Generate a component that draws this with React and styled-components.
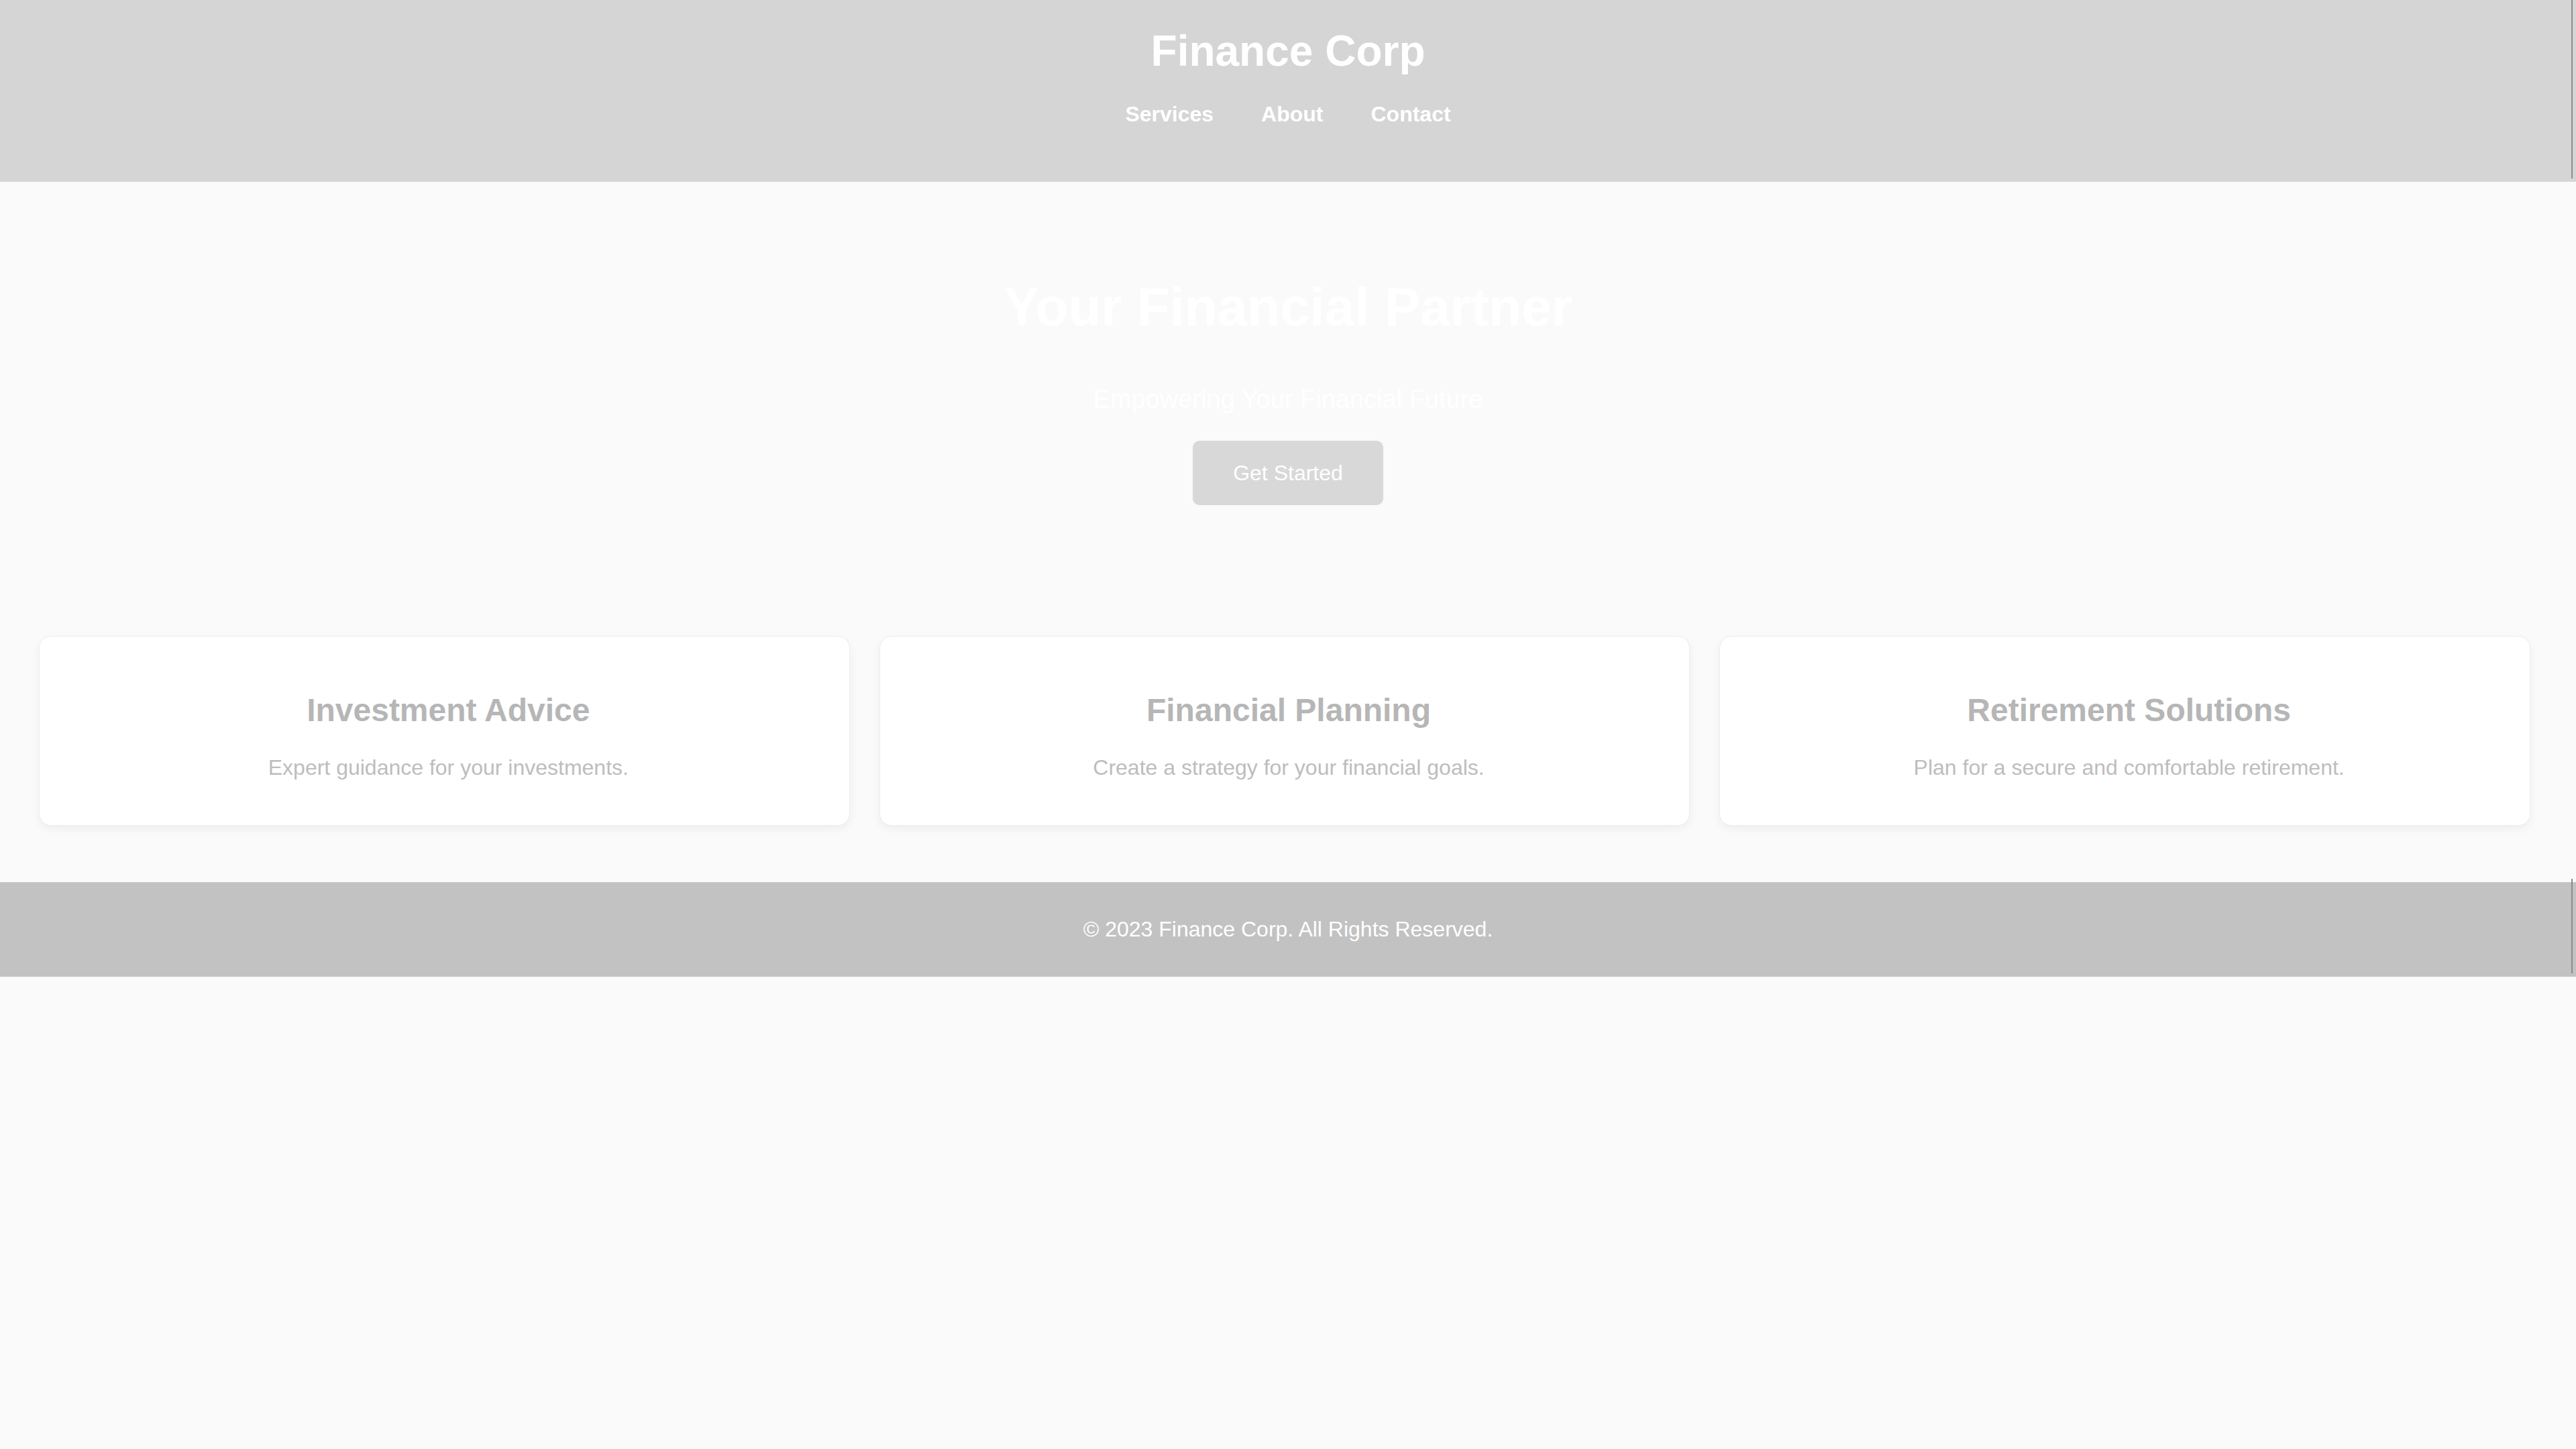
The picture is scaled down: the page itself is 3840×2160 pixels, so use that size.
import React from 'react';
import styled, { createGlobalStyle } from 'styled-components';

const GlobalStyle = createGlobalStyle`
  body {
    margin: 0;
    background: #fafafa;
    font-family: "Liberation Sans", Arial, sans-serif;
  }
`;

const services = [
  { title: 'Investment Advice', text: 'Expert guidance for your investments.' },
  { title: 'Financial Planning', text: 'Create a strategy for your financial goals.' },
  { title: 'Retirement Solutions', text: 'Plan for a secure and comfortable retirement.' },
];

const App = () => (
  <Page>
    <GlobalStyle />
    <Header>
      <Brand>Finance Corp</Brand>
      <Nav>
        <NavLink href="#services">Services</NavLink>
        <NavLink href="#about">About</NavLink>
        <NavLink href="#contact">Contact</NavLink>
      </Nav>
    </Header>

    <Hero>
      <HeroTitle>Your Financial Partner</HeroTitle>
      <HeroText>Empowering Your Financial Future</HeroText>
      <Button>Get Started</Button>
    </Hero>

    <Cards id="services">
      {services.map(item => (
        <Card key={item.title}>
          <CardTitle>{item.title}</CardTitle>
          <CardText>{item.text}</CardText>
        </Card>
      ))}
    </Cards>

    <Footer>
      <FooterText>© 2023 Finance Corp. All Rights Reserved.</FooterText>
    </Footer>
  </Page>
);

const Page = styled.div`
  min-height: 2160px;
  background: #fafafa;
`;

const edgeLine = `
  &::after {
    content: '';
    position: absolute;
    right: 5px;
    width: 2px;
    background: #8c8c8c;
  }
`;

const Header = styled.header`
  position: relative;
  height: 271px;
  box-sizing: border-box;
  padding-top: 39px;
  background: #d5d5d5;
  display: flex;
  flex-direction: column;
  align-items: center;
  ${edgeLine}
  &::after {
    top: 0;
    bottom: 5px;
  }
`;

const Brand = styled.h1`
  margin: 0 0 39px;
  font-size: 64px;
  line-height: 74px;
  font-weight: 700;
  color: #ffffff;
`;

const Nav = styled.nav`
  display: flex;
  gap: 71px;
`;

const NavLink = styled.a`
  font-size: 32px;
  line-height: 37px;
  font-weight: 700;
  color: #ffffff;
  text-decoration: none;
`;

const Hero = styled.section`
  display: flex;
  flex-direction: column;
  align-items: center;
  padding: 141px 0 195px;
`;

const HeroTitle = styled.h2`
  margin: 0 0 69px;
  font-size: 80px;
  line-height: 92px;
  font-weight: 700;
  color: #ffffff;
`;

const HeroText = styled.p`
  margin: 0 0 40px;
  font-size: 38px;
  line-height: 44px;
  color: #ffffff;
`;

const Button = styled.button`
  width: 284px;
  height: 96px;
  border: none;
  border-radius: 10px;
  background: #d8d8d8;
  color: #ffffff;
  font-family: "Liberation Sans", Arial, sans-serif;
  font-size: 32px;
  cursor: pointer;
`;

const Cards = styled.section`
  display: grid;
  grid-template-columns: repeat(3, 1fr);
  gap: 44px;
  padding: 0 68px 84px 58px;
`;

const Card = styled.div`
  height: 283px;
  box-sizing: border-box;
  padding: 82px 0 0 12px;
  background: #ffffff;
  border: 1px solid #ededed;
  border-radius: 18px;
  box-shadow: 0 5px 14px rgba(0, 0, 0, 0.05);
  display: flex;
  flex-direction: column;
  align-items: center;
  text-align: center;
`;

const CardTitle = styled.h3`
  margin: 0 0 40px;
  font-size: 48px;
  line-height: 55px;
  font-weight: 700;
  color: #b6b6b6;
`;

const CardText = styled.p`
  margin: 0;
  font-size: 32px;
  line-height: 37px;
  color: #bdbdbd;
`;

const Footer = styled.footer`
  position: relative;
  height: 141px;
  background: #c2c2c2;
  display: flex;
  align-items: center;
  justify-content: center;
  ${edgeLine}
  &::after {
    top: -5px;
    bottom: 5px;
  }
`;

const FooterText = styled.p`
  margin: 0;
  font-size: 32px;
  line-height: 37px;
  color: #ffffff;
`;

export default App;
